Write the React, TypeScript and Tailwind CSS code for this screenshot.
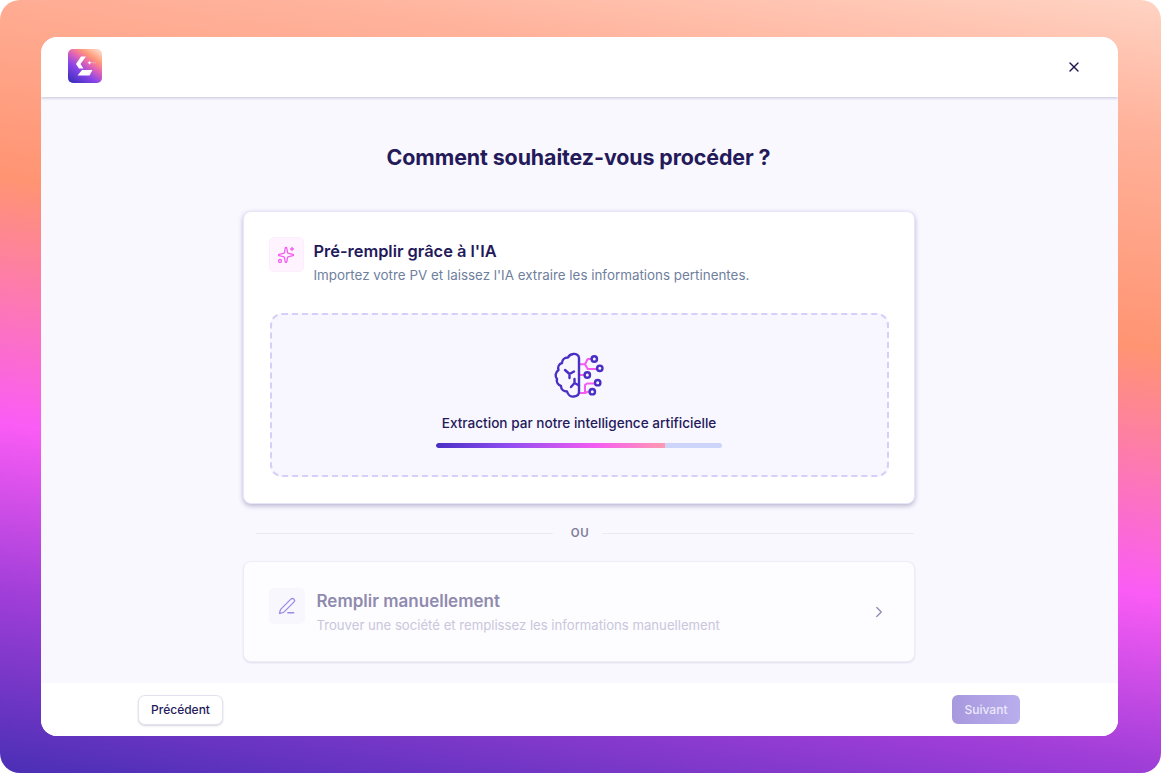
import { ChevronRight, PenLine, Sparkles, X } from 'lucide-react'

function Logo() {
  return (
    <svg width="34" height="34" viewBox="0 0 34 34">
      <defs>
        <linearGradient id="logo-bg" x1="0.15" y1="1" x2="0.85" y2="0">
          <stop offset="0" stopColor="#3f2fc0" />
          <stop offset="0.35" stopColor="#8b45e8" />
          <stop offset="0.6" stopColor="#e866b0" />
          <stop offset="0.78" stopColor="#ff9a78" />
          <stop offset="1" stopColor="#ffd8c8" />
        </linearGradient>
      </defs>
      <rect width="34" height="34" rx="5" fill="url(#logo-bg)" />
      <path d="M13 7.500h5L12.500 15l3 4.500h-4.500L8 15z" fill="#fff" />
      <path d="M14 21h10.500l-3 5.500H9.500z" fill="#fff" />
      <path d="M21.500 11.500c.3 1.500.8 2 2.300 2.300-1.500.3-2 .8-2.300 2.300-.3-1.500-.8-2-2.300-2.300 1.500-.3 2-.8 2.300-2.300z" fill="#fff" />
      <path d="M23 13.800h5" stroke="#fff" strokeOpacity="0.5" strokeWidth="0.6" />
    </svg>
  )
}

function BrainIcon() {
  return (
    <svg className="ml-px" width="70" height="60" viewBox="0 0 70 60" fill="none" strokeLinecap="round" strokeLinejoin="round">
      <g stroke="#f45cf0" strokeWidth="2">
        <path d="M35 19.300h5l2.700-5.300h4" />
        <path d="M40 19.300l2.700 4.700h9" />
        <path d="M35 30h5" />
        <path d="M35 48h5v-8l2-1.500h8" />
        <path d="M40 48l3-1.300h1" />
      </g>
      <g stroke="#4a2fc4" strokeWidth="2.400">
        <circle cx="49.300" cy="14" r="2.700" />
        <circle cx="54.800" cy="23.300" r="2.700" />
        <circle cx="42.300" cy="30" r="2.700" />
        <circle cx="52.700" cy="37.700" r="2.700" />
        <circle cx="47.300" cy="46.700" r="2.700" />
        <path d="M34 13c0-3-3-4.500-6-4-2.500.3-4 1.500-5 3.500-3.500 0-6 2.500-6 5.500-3 1-4.500 4-3.500 7-3.500 2.500-3.500 6.500-1.500 9-1 3 1 6 4 7 0 3.500 3 5.500 6 5.500 1 3.500 4 5.500 7 5 3-.3 5-2 5-4.500z" />
        <path d="M20 25l4.500 4 4.500-2.500M24.500 29v4" />
        <path d="M34 40.500l-4.500-2.500-3.500 4M29.500 38v-4" />
      </g>
    </svg>
  )
}

export default function App() {
  return (
    <div className="h-[773px] w-[1161px] bg-white font-['Inter',sans-serif]">
      <div className="flex h-full rounded-[20px] bg-[linear-gradient(188.500deg,#ffd3c3_0%,#ffb29b_14%,#ff9472_37%,#fa5cf5_63%,#a03ed8_81%,#4a2fb5_100%)] pb-[37px] pl-[41px] pr-[43px] pt-[37px]">
        <div className="flex flex-1 flex-col overflow-hidden rounded-[16px] bg-[#f9f8ff]">
          {/* Header */}
          <header className="relative z-10 flex h-[60px] shrink-0 items-center justify-between bg-white pl-[27px] pr-[36px] pb-[3px] shadow-[0_1px_3px_rgba(40,30,90,0.25)]">
            <Logo />
            <X className="mt-[3px] h-[16px] w-[16px] text-[#20164f]" strokeWidth={2} />
          </header>

          {/* Body */}
          <main className="flex flex-1 flex-col items-center pr-[2px]">
            <h1 className="mt-[47px] text-[21.400px] font-bold leading-[26px] tracking-[-0.1px] text-[#241a5a]">
              Comment souhaitez-vous procéder ?
            </h1>

            <section className="mt-[41px] flex h-[293px] w-[672px] flex-col rounded-[8px] border border-[#e6e6fb] bg-white pl-[25px] pr-[26px] pt-[25px] shadow-[0_2px_5px_rgba(50,40,110,0.32)]">
              <div className="flex gap-[10px]">
                <div className="flex h-[35px] w-[35px] items-center justify-center rounded-[5px] border border-[#fdeefd] bg-[#fef3fe]">
                  <Sparkles className="h-[18px] w-[18px] text-[#f45cf0]" strokeWidth={1.700} />
                </div>
                <div>
                  <h2 className="pt-px text-[16.400px] font-semibold leading-[26px] text-[#241a5a]">Pré-remplir grâce à l'IA</h2>
                  <p className="mt-[1px] text-[13.400px] leading-[20px] text-[#6f7f9e]">
                    Importez votre PV et laissez l'IA extraire les informations pertinentes.
                  </p>
                </div>
              </div>

              <div className="ml-px mr-[-1px] mt-[28px] flex h-[164px] flex-col items-center rounded-[12px] border-2 border-dashed border-[#d6cffa] bg-[#f8f6ff] pt-[30px]">
                <BrainIcon />
                <p className="mt-[8px] text-[13.600px] font-medium leading-[20px] text-[#241a5a]">
                  Extraction par notre intelligence artificielle
                </p>
                <div className="mt-[10px] h-[5px] w-[286px] overflow-hidden rounded-full bg-[#cdd5fb]">
                  <div className="h-full w-[80%] rounded-l-full bg-[linear-gradient(90deg,#4a2fc4_0%,#8c4cf0_30%,#f45cf0_70%,#ff9ab0_100%)]" />
                </div>
              </div>
            </section>

            <div className="ml-[13px] mt-[20px] flex items-center">
              <div className="h-px w-[297px] bg-[#ecebf5]" />
              <span className="ml-[18px] mr-[13px] text-[11.500px] font-semibold leading-[18px] tracking-[0.5px] text-[#7f7c98]">OU</span>
              <div className="h-px w-[312px] bg-[#ecebf5]" />
            </div>

            <section className="mt-[19px] flex h-[101px] w-[672px] items-center rounded-[8px] border border-[#eeedf6] bg-[#fdfcff] pl-[25px] pr-[26px] shadow-[0_1px_2px_rgba(50,40,110,0.12)]">
              <div className="mb-[11px] flex h-[36px] w-[36px] items-center justify-center rounded-[5px] bg-[#f8f7fe]">
                <PenLine className="h-[18px] w-[18px] text-[#9a8ae6]" strokeWidth={1.700} />
              </div>
              <div className="ml-[12px] flex-1">
                <h2 className="text-[17px] font-semibold leading-[26px] text-[#8f8bae]">Remplir manuellement</h2>
                <p className="mt-[1px] text-[13.150px] leading-[20px] text-[#c9c7db]">
                  Trouver une société et remplissez les informations manuellement
                </p>
              </div>
              <ChevronRight className="h-[18px] w-[18px] text-[#8f8bae]" strokeWidth={1.700} />
            </section>
          </main>

          {/* Footer */}
          <footer className="flex h-[53px] shrink-0 items-center justify-between bg-white pl-[97px] pr-[98px]">
            <button className="h-[30px] w-[85px] rounded-[7px] border border-[#e3e3ef] bg-white text-[12px] font-medium text-[#241a5a] shadow-[0_1px_2px_rgba(50,40,110,0.2)]">
              Précédent
            </button>
            <button className="h-[29px] w-[68px] rounded-[6px] bg-[linear-gradient(90deg,#a898de,#b9aeed)] text-[12px] font-medium text-[#ece8fb]">
              Suivant
            </button>
          </footer>
        </div>
      </div>
    </div>
  )
}
